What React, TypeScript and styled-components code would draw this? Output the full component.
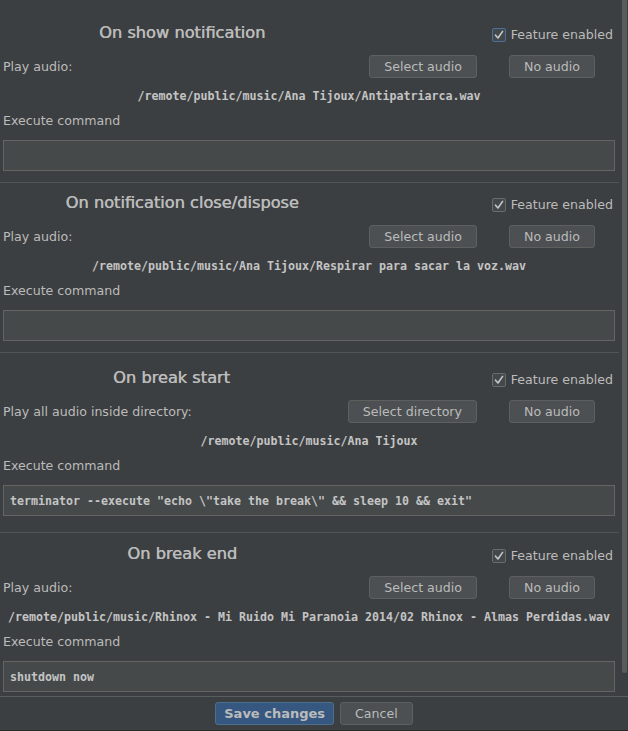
import React from "react";
import styled, { createGlobalStyle } from "styled-components";

const GlobalStyle = createGlobalStyle`
  html, body {
    margin: 0;
    padding: 0;
    background: #3c3f41;
  }
  * {
    box-sizing: border-box;
  }
`;

const Window = styled.div`
  width: 628px;
  height: 731px;
  display: flex;
  flex-direction: column;
  background: #3c3f41;
  color: #bbbbbb;
  font-family: "DejaVu Sans", "Liberation Sans", sans-serif;
  font-size: 12.6px;
  overflow: hidden;
`;

const Body = styled.div`
  flex: 1;
  display: flex;
  min-height: 0;
`;

const ScrollArea = styled.div`
  flex: 1;
  overflow: hidden;
`;

const ScrollTrack = styled.div`
  width: 9px;
  flex: 0 0 9px;
  padding: 0 1px 0 3px;
`;

const ScrollThumb = styled.div`
  height: 673px;
  width: 100%;
  background: #595b5d;
  border-radius: 0 0 3px 3px;
`;

const Section = styled.section<{ $padTop: number; $padBottom: number; $last?: boolean }>`
  display: grid;
  grid-template-columns: 1fr auto 130px;
  column-gap: 8px;
  padding: ${({ $padTop, $padBottom }) => `${$padTop}px 4px ${$padBottom}px 3px`};
  border-bottom: ${({ $last }) => ($last ? "none" : "1px solid #515557")};
`;

const Title = styled.h2`
  margin: 0;
  height: 24px;
  line-height: 24px;
  font-size: 16.2px;
  font-weight: normal;
  text-align: center;
  color: #bbbbbb;
  text-shadow: 0.5px 0 0 #bbbbbb;
`;

const CheckRow = styled.label`
  grid-column: 2 / 4;
  justify-self: end;
  display: flex;
  align-items: center;
  gap: 5px;
  height: 24px;
  padding-top: 3px;
  margin-right: 2px;
`;

const CheckBox = styled.span<{ $focused?: boolean }>`
  width: 14px;
  height: 14px;
  border: 1px solid ${({ $focused }) => ($focused ? "#4a7199" : "#6b6b6b")};
  border-radius: 2px;
  background: #43494a;
  display: flex;
  align-items: center;
  justify-content: center;
`;

const ButtonRow = styled.div`
  display: contents;
`;

const RowLabel = styled.span`
  align-self: center;
  margin-top: 10px;
`;

const Button = styled.button<{ $primary?: boolean; $pad?: number }>`
  height: 23px;
  margin-top: 10px;
  padding: 0 ${({ $pad }) => $pad ?? 14}px;
  font-family: "DejaVu Sans", "Liberation Sans", sans-serif;
  font-size: ${({ $primary }) => ($primary ? "13px" : "12.6px")};
  font-weight: ${({ $primary }) => ($primary ? "bold" : "normal")};
  color: #bbbbbb;
  background: ${({ $primary }) => ($primary ? "#365880" : "#4c5052")};
  border: 1px solid ${({ $primary }) => ($primary ? "#4c708c" : "#5e6060")};
  border-radius: 3px;
  cursor: pointer;
`;

const SideButton = styled(Button)`
  justify-self: center;
  margin-left: 4px;
`;

const PathText = styled.div`
  grid-column: 1 / 4;
  margin-top: 9px;
  height: 18px;
  line-height: 18px;
  text-align: center;
  font-family: "DejaVu Sans Mono", "Liberation Mono", monospace;
  font-weight: bold;
  font-size: 11.63px;
  white-space: pre;
  color: #c4c4c4;
`;

const FieldLabel = styled.div`
  grid-column: 1 / 4;
  margin-top: 7px;
  height: 18px;
  line-height: 18px;
`;

const CommandInput = styled.div`
  grid-column: 1 / 4;
  margin-top: 10px;
  height: 31px;
  padding: 0 6px;
  display: flex;
  align-items: center;
  background: #45494a;
  border: 1px solid #646464;
  font-family: "DejaVu Sans Mono", "Liberation Mono", monospace;
  font-weight: bold;
  font-size: 11.63px;
  white-space: pre;
  color: #c4c4c4;
`;

const Footer = styled.footer`
  height: 35px;
  flex: 0 0 35px;
  border-top: 1px solid #5a5d5f;
  border-bottom: 1px solid #2b2b2b;
  display: flex;
  justify-content: center;
  align-items: flex-start;
  gap: 6px;
  padding-top: 5px;

  button {
    margin-top: 0;
  }
`;

interface HookSection {
  title: string;
  audioLabel: string;
  selectLabel: string;
  path: string;
  command: string;
  padTop: number;
  padBottom: number;
  focused?: boolean;
}

const sections: HookSection[] = [
  {
    title: "On show notification",
    audioLabel: "Play audio:",
    selectLabel: "Select audio",
    path: "/remote/public/music/Ana Tijoux/Antipatriarca.wav",
    command: "",
    padTop: 21,
    padBottom: 11,
    focused: true,
  },
  {
    title: "On notification close/dispose",
    audioLabel: "Play audio:",
    selectLabel: "Select audio",
    path: "/remote/public/music/Ana Tijoux/Respirar para sacar la voz.wav",
    command: "",
    padTop: 8,
    padBottom: 11,
  },
  {
    title: "On break start",
    audioLabel: "Play all audio inside directory:",
    selectLabel: "Select directory",
    path: "/remote/public/music/Ana Tijoux",
    command: 'terminator --execute "echo \\"take the break\\" && sleep 10 && exit"',
    padTop: 13,
    padBottom: 16,
  },
  {
    title: "On break end",
    audioLabel: "Play audio:",
    selectLabel: "Select audio",
    path: "/remote/public/music/Rhinox - Mi Ruido Mi Paranoia 2014/02 Rhinox - Almas Perdidas.wav",
    command: "shutdown now",
    padTop: 9,
    padBottom: 0,
  },
];

const CheckMark = () => (
  <svg width="10" height="10" viewBox="0 0 10 10">
    <path d="M1.5 5.2 L4 8 L8.6 1.4" fill="none" stroke="#c8c8c8" strokeWidth="1.6" strokeLinecap="round" strokeLinejoin="round" />
  </svg>
);

const App = () => {
  return (
    <Window>
      <GlobalStyle />
      <Body>
        <ScrollArea>
          {sections.map((s, i) => (
            <Section key={s.title} $padTop={s.padTop} $padBottom={s.padBottom} $last={i === sections.length - 1}>
              <Title>{s.title}</Title>
              <CheckRow>
                <CheckBox $focused={s.focused}>
                  <CheckMark />
                </CheckBox>
                Feature enabled
              </CheckRow>
              <ButtonRow>
                <RowLabel>{s.audioLabel}</RowLabel>
                <Button>{s.selectLabel}</Button>
                <SideButton>No audio</SideButton>
              </ButtonRow>
              <PathText>{s.path}</PathText>
              <FieldLabel>Execute command</FieldLabel>
              <CommandInput>{s.command}</CommandInput>
            </Section>
          ))}
        </ScrollArea>
        <ScrollTrack>
          <ScrollThumb />
        </ScrollTrack>
      </Body>
      <Footer>
        <Button $primary $pad={8}>
          Save changes
        </Button>
        <Button>Cancel</Button>
      </Footer>
    </Window>
  );
};

export default App;
